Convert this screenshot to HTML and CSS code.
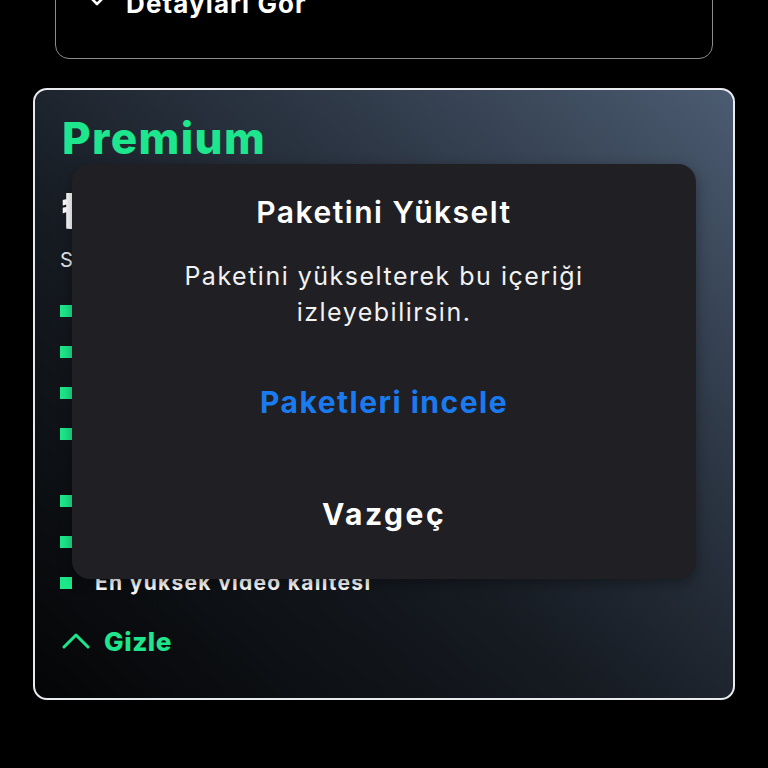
FILE: index.html
```html
<!DOCTYPE html>
<html lang="tr">
<head>
<meta charset="utf-8">
<title>Paketler</title>
<link rel="stylesheet" href="styles.css">
</head>
<body>
<main class="page">
  <section class="top-card">
    <button class="toggle">
      <svg class="chev" width="18" height="12" viewBox="0 0 18 12"><path d="M2 2 L9 9 L16 2" fill="none" stroke="#fff" stroke-width="2.6" stroke-linecap="round" stroke-linejoin="round"/></svg>
      <span>Detayları Gör</span>
    </button>
  </section>

  <section class="plan-card">
    <h2 class="plan-name">Premium</h2>
    <div class="price">₺149,99<span class="per">/ay</span></div>
    <p class="subtitle">Sınırsız erişim, reklamsız deneyim</p>
    <ul class="features">
      <li><i class="dot"></i><span>Reklamsız izleme</span></li>
      <li><i class="dot"></i><span>Tüm dizi ve filmler</span></li>
      <li><i class="dot"></i><span>Canlı yayınlar</span></li>
      <li><i class="dot"></i><span>Aynı anda 4 farklı cihazda izleme ve çevrimdışı indirme imkânı</span></li>
      <li><i class="dot"></i><span>Özel içerikler</span></li>
      <li><i class="dot"></i><span>Erken erişim</span></li>
      <li><i class="dot"></i><span>En yüksek video kalitesi</span></li>
    </ul>
    <button class="hide-btn">
      <svg width="28" height="16" viewBox="0 0 28 16"><path d="M2 14 L14 2 L26 14" fill="none" stroke="#1ee68c" stroke-width="3" stroke-linecap="round" stroke-linejoin="round"/></svg>
      <span>Gizle</span>
    </button>
  </section>
</main>

<div class="dialog" role="dialog">
  <h3 class="dialog-title">Paketini Yükselt</h3>
  <p class="dialog-text">Paketini yükselterek bu içeriği<br>izleyebilirsin.</p>
  <button class="dialog-btn primary">Paketleri incele</button>
  <button class="dialog-btn cancel">Vazgeç</button>
</div>
</body>
</html>
```

FILE: styles.css
```css
* { box-sizing: border-box; }
html, body { margin: 0; padding: 0; background: #000; }
body {
  font-family: "Inter", "Noto Sans", sans-serif;
  color: #fff;
  width: 768px;
  height: 768px;
  overflow: hidden;
  position: relative;
}
.page {
  display: flex;
  flex-direction: column;
}
.top-card {
  margin: -60px 55px 0;
  padding: 45px 30px 42px;
  border: 1.5px solid #8c8c8c;
  border-radius: 14px;
}
.toggle {
  display: flex;
  align-items: center;
  gap: 20px;
  height: 30px;
  padding: 5px 0 0 2px;
  background: none;
  border: 0;
  color: #fff;
  font: 700 26px "Inter", sans-serif;
  letter-spacing: 1.1px;
}
.toggle .chev { margin-top: -5px; }
.plan-card {
  margin: 29px 33px 0;
  height: 612px;
  border: 2px solid #e8eaee;
  border-radius: 14px;
  padding: 22px 25px 0;
  background: linear-gradient(to top right, #040506 0%, #161b22 40%, #2c3644 68%, #4b5b71 100%);
  display: flex;
  flex-direction: column;
}
.plan-name {
  margin: 0 0 0 2px;
  font-size: 44px;
  line-height: 52px;
  font-weight: 800;
  color: #1ee68c;
  letter-spacing: 1.4px;
}
.price {
  margin-top: 22px;
  height: 50px;
  font-size: 50px;
  line-height: 50px;
  font-weight: 800;
  overflow: visible;
}
.price .per { font-size: 20px; font-weight: 600; }
.subtitle {
  margin: 10px 0 0;
  height: 28px;
  font-size: 20px;
  line-height: 28px;
  color: #e5e7eb;
}
.features {
  list-style: none;
  margin: 24px 0 0;
  padding: 0;
  display: flex;
  flex-direction: column;
  gap: 15px;
}
.features li {
  display: flex;
  align-items: flex-start;
  gap: 23px;
  font-size: 21px;
  line-height: 26px;
  font-weight: 700;
  letter-spacing: 1.3px;
  padding-right: 60px;
}
.dot {
  flex: none;
  width: 12px;
  height: 12px;
  margin-top: 7px;
  background: #1de98b;
}
.hide-btn {
  margin-top: 28px;
  display: flex;
  align-items: center;
  gap: 14px;
  padding: 0 0 0 2px;
  background: none;
  border: 0;
  color: #1ee68c;
  font: 800 26px "Inter", sans-serif;
  letter-spacing: 0.6px;
  height: 34px;
}
.dialog {
  position: absolute;
  left: 72px;
  top: 164px;
  width: 624px;
  height: 415px;
  background: #1f1f24;
  border-radius: 18px;
  box-shadow: 0 4px 14px rgba(0, 0, 0, 0.35);
  padding: 30px 20px 0;
  display: flex;
  flex-direction: column;
  align-items: center;
  text-align: center;
}
.dialog-title {
  margin: 0;
  font-size: 30px;
  line-height: 36px;
  font-weight: 600;
  letter-spacing: 1.5px;
}
.dialog-text {
  margin: 28px 0 0;
  font-size: 25px;
  line-height: 36px;
  font-weight: 400;
  letter-spacing: 1.5px;
  color: #f2f2f2;
}
.dialog-btn {
  background: none;
  border: 0;
  height: 56px;
  font-family: "Inter", sans-serif;
  font-size: 30px;
  font-weight: 700;
  letter-spacing: 1.5px;
}
.dialog-btn.primary { margin-top: 44px; color: #1a7bf0; }
.dialog-btn.cancel { margin-top: 56px; color: #fff; letter-spacing: 2.5px; }
```
